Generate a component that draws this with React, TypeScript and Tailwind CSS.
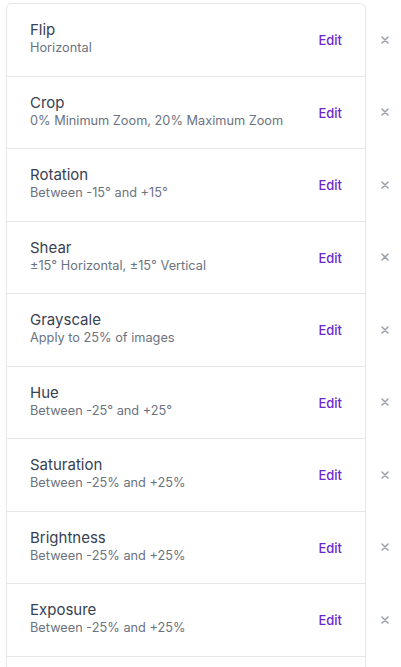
import React from 'react'

interface Step {
    title: string;
    detail: string;
}

const steps: Step[] = [
    { title: 'Flip', detail: 'Horizontal' },
    { title: 'Crop', detail: '0% Minimum Zoom, 20% Maximum Zoom' },
    { title: 'Rotation', detail: 'Between -15° and +15°' },
    { title: 'Shear', detail: '±15° Horizontal, ±15° Vertical' },
    { title: 'Grayscale', detail: 'Apply to 25% of images' },
    { title: 'Hue', detail: 'Between -25° and +25°' },
    { title: 'Saturation', detail: 'Between -25% and +25%' },
    { title: 'Brightness', detail: 'Between -25% and +25%' },
    { title: 'Exposure', detail: 'Between -25% and +25%' },
]

function CloseIcon() {
    return (
        <svg width="8" height="8" viewBox="0 0 8 8" fill="none">
            <path d="M1 1L7 7M7 1L1 7" stroke="#9ca3af" strokeWidth="1.6" strokeLinecap="round" />
        </svg>
    )
}

export default function App() {
    return (
        <div className="h-[667px] w-[401px] overflow-hidden bg-white font-['Inter',sans-serif]">
            <div className="flex pl-[6px] pt-[3px]">
                {/* Augmentation steps */}
                <div className="h-[700px] w-[360px] shrink-0 rounded-t-md border border-b-0 border-[#e5e7eb]">
                    {steps.map((step) => (
                        <div
                            key={step.title}
                            className="flex h-[72.5px] items-start justify-between border-b border-[#e5e7eb] pl-[23px] pr-[23px] pt-[16px]"
                        >
                            <div className="flex flex-col">
                                <span className="text-[15px] leading-[19px] text-[#374151]">{step.title}</span>
                                <span className="text-[12.75px] leading-[18px] text-[#6b7280]">{step.detail}</span>
                            </div>
                            <button className="mt-[11px] text-[13px] font-medium leading-[18px] text-[#6d28c9]">Edit</button>
                        </div>
                    ))}
                </div>

                <div className="flex flex-col">
                    {steps.map((step) => (
                        <div key={step.title} className="flex h-[72.5px] w-[37px] items-center justify-center">
                            <button className="mt-[1px] flex h-[10px] w-[10px] items-center justify-center">
                                <CloseIcon />
                            </button>
                        </div>
                    ))}
                </div>
            </div>
        </div>
    )
}
